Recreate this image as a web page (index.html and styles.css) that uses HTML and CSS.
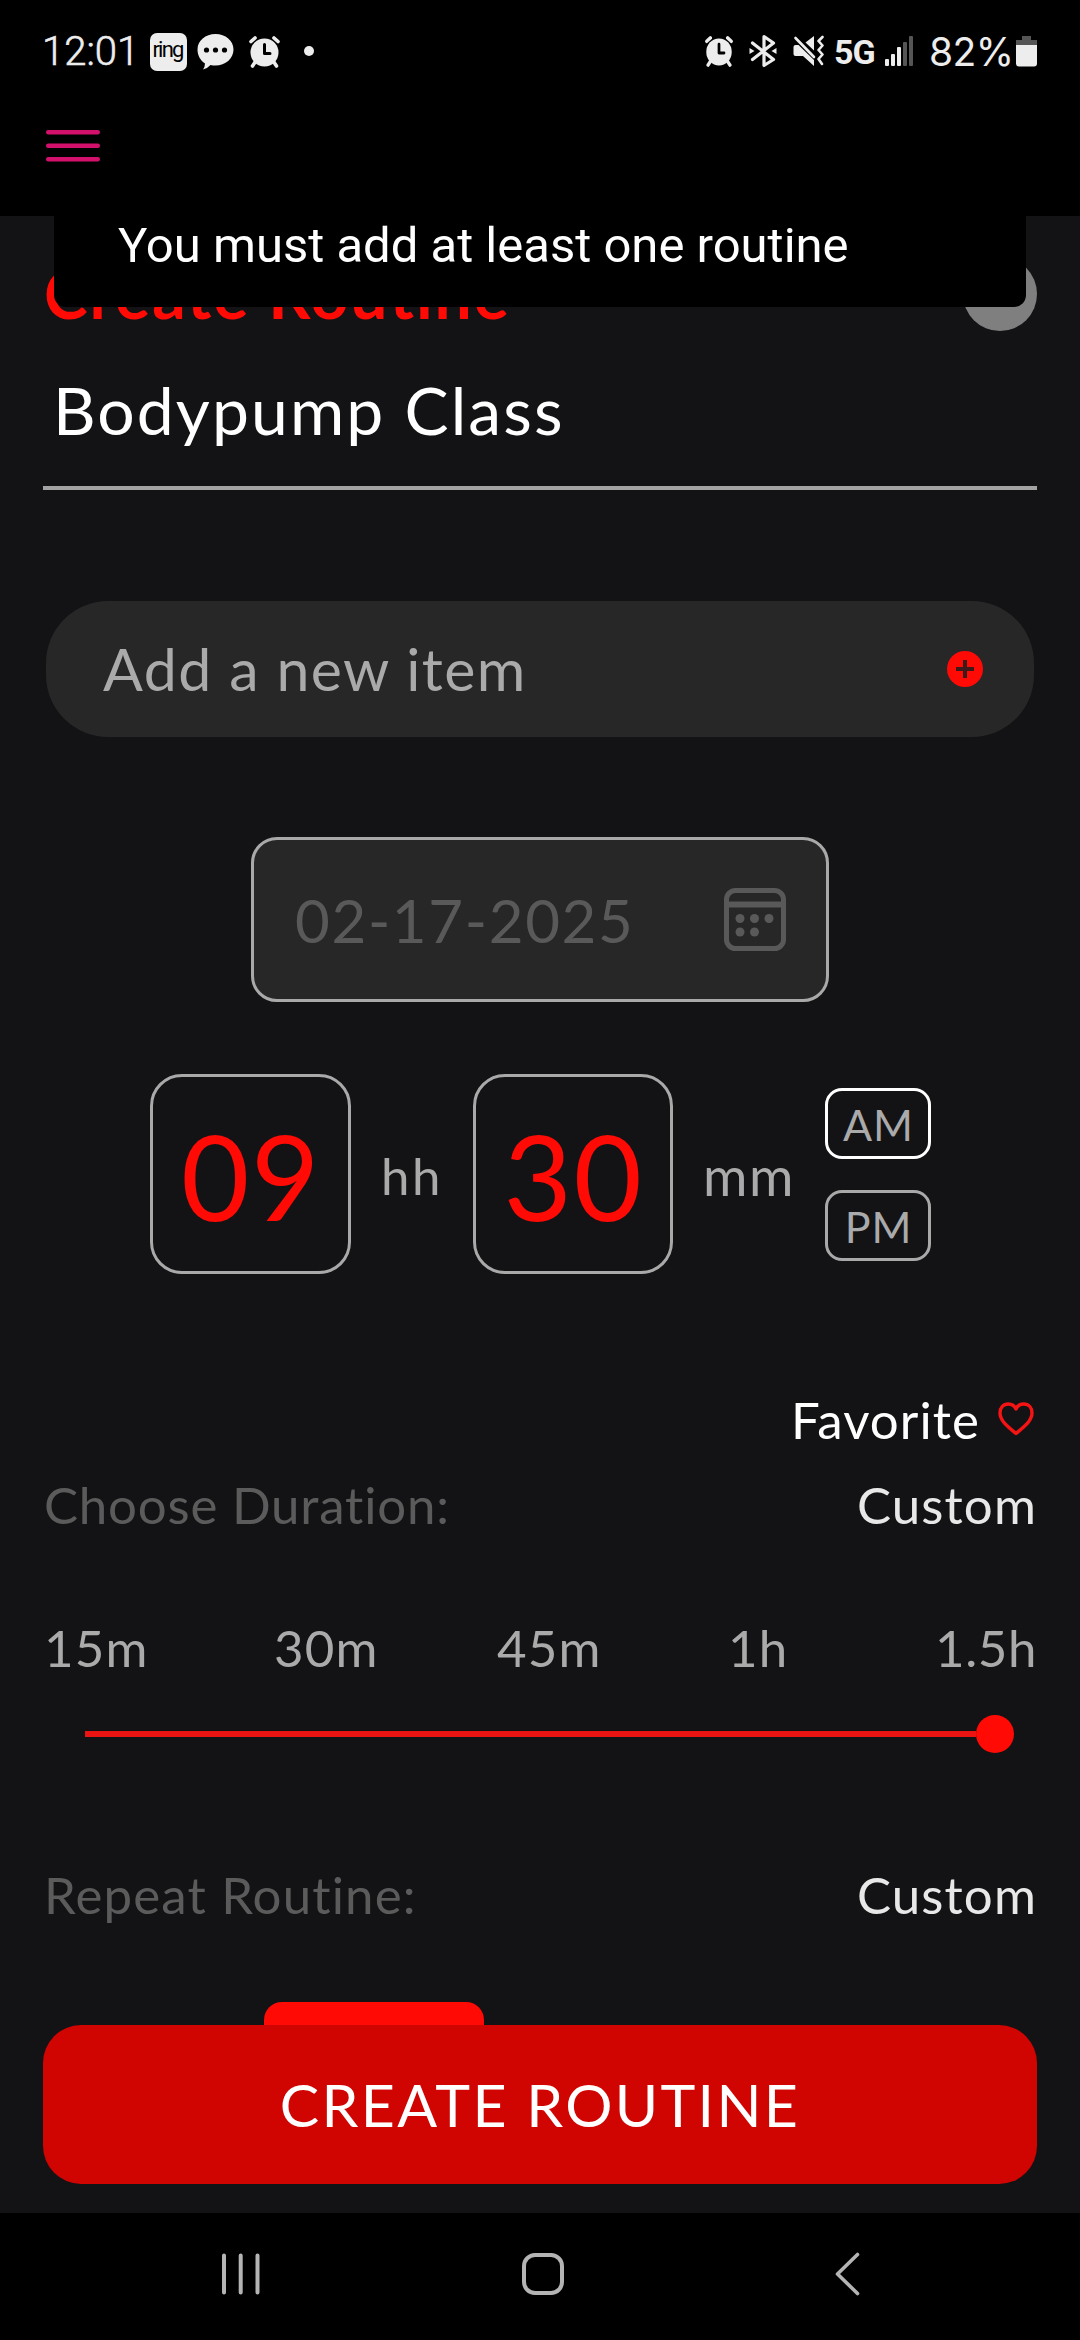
FILE: index.html
```
<!DOCTYPE html>
<html lang="en">
<head>
<meta charset="utf-8">
<title>Create Routine</title>
<link rel="stylesheet" href="styles.css">
</head>
<body>
<div class="status">
  <span class="clock">12:01</span>
  <span class="ring">ring</span>
  <svg class="bubble" width="37" height="37" viewBox="0 0 37 37"><path fill="#ededed" d="M18.500 1C28.500 1 36.500 7.500 36.500 16.500S28.500 32.500 18.500 32.500Q16 32.500 13.500 32Q11 35 6 36.500Q8 33.500 8 30.500C3.500 27.500.5 22.500.5 16.500.5 7.500 8.500 1 18.500 1Z"/><g fill="#000"><circle cx="9.500" cy="17" r="2.600"/><circle cx="18.500" cy="17" r="2.600"/><circle cx="27.500" cy="17" r="2.600"/></g></svg>
  <svg class="alarm" width="33" height="33" viewBox="0 0 33 33"><circle cx="16.500" cy="17.500" r="14" fill="#ededed"/><g fill="none" stroke="#ededed" stroke-width="3.600" stroke-linecap="round"><path d="M3 6.500l4-3.500M30 6.500L26 3M7.500 26.500l-3 4.500M25.500 26.500l3 4.500"/></g><path fill="none" stroke="#000" stroke-width="3" stroke-linecap="round" stroke-linejoin="round" d="M16.500 9.500v9H22"/></svg>
  <span class="dot"></span>
  <div class="tray">
    <svg width="30" height="32" viewBox="0 0 33 33" preserveAspectRatio="none"><circle cx="16.500" cy="17.500" r="14" fill="#ededed"/><g fill="none" stroke="#ededed" stroke-width="3.600" stroke-linecap="round"><path d="M3 6.500l4-3.500M30 6.500L26 3M7.500 26.500l-3 4.500M25.500 26.500l3 4.500"/></g><path fill="none" stroke="#000" stroke-width="3" stroke-linecap="round" stroke-linejoin="round" d="M16.500 9.500v9H22"/></svg>
    <svg class="bt" width="28" height="34" viewBox="0 0 28 34"><path fill="none" stroke="#ededed" stroke-width="3.200" stroke-linecap="round" stroke-linejoin="round" d="M3.500 9L24.500 25.500L15 31.500V2.500L24.500 9L3.500 25.500"/><path fill="#ededed" d="M.5 14v6l5-3zM27.500 14v6l-5-3z"/></svg>
    <svg class="mute" width="31" height="32" viewBox="0 0 31 32"><path fill="#ededed" d="M.5 12q0-2 2-2h3L21 25v6L10 21H2.500q-2 0-2-2zM21 1v14.500L12.500 7.500z"/><path stroke="#ededed" stroke-width="2.600" stroke-linecap="round" d="M2.500 3L21 22"/><path fill="none" stroke="#ededed" stroke-width="2.600" stroke-linecap="round" stroke-linejoin="round" d="M29.500 2L25.500 6l4 4.500-4 4.500 4 4.500-4 4.500 3.500 5"/></svg>
    <span class="net">5G</span>
    <svg class="signal" width="28" height="30" viewBox="0 0 28 30"><g fill="#ededed"><rect x="0" y="23" width="4" height="7" rx="1"/><rect x="6" y="18" width="4" height="12" rx="1"/><rect x="12" y="11" width="4" height="19" rx="1"/></g><g fill="#555"><rect x="18" y="6" width="4" height="24" rx="1"/><rect x="24" y="0" width="4" height="30" rx="1"/></g></svg>
    <span class="level">82%</span>
    <svg width="21" height="31" viewBox="0 0 21 31"><path fill="#555" d="M6 0h9v4h6v6H0V4h6z"/><path fill="#ededed" d="M0 9h21v18.500q0 3-3 3H3q-3 0-3-3z"/></svg>
  </div>
</div>
<header class="appbar">
  <svg width="54" height="32" viewBox="0 0 54 32"><path stroke="#d3116d" stroke-width="4.400" stroke-linecap="round" d="M2.200 2.200h49.600M2.200 15.700h49.600M2.200 29.200h49.600"/></svg>
</header>
<main class="screen">
  <div class="heading"><h1>Create Routine</h1><span class="avatar"></span></div>
  <div class="name">Bodypump Class</div>
  <div class="item"><span>Add a new item</span>
    <svg width="36" height="36" viewBox="0 0 36 36"><circle cx="18" cy="18" r="18" fill="#ff0a05"/><path stroke="#3c1a19" stroke-width="4" d="M18 9v18M9 18h18"/></svg>
  </div>
  <div class="date"><span>02-17-2025</span>
    <svg width="62" height="63" viewBox="0 0 62 63" fill="#595959"><rect x="2.500" y="2.500" width="57" height="58" rx="9" fill="none" stroke="#595959" stroke-width="5"/><path d="M3 13.500h56v6H3z"/><circle cx="16" cy="30.500" r="4.500"/><circle cx="30.500" cy="30.500" r="4.500"/><circle cx="45" cy="30.500" r="4.500"/><circle cx="16" cy="44" r="4.500"/><circle cx="30.500" cy="44" r="4.500"/></svg>
  </div>
  <div class="time">
    <div class="digits">09</div><span class="unit">hh</span>
    <div class="digits">30</div><span class="unit mm">mm</span>
    <div class="ampm"><div class="half on">AM</div><div class="half pm">PM</div></div>
  </div>
  <div class="favorite"><span>Favorite</span>
    <svg width="36" height="34" viewBox="0 0 36 34"><path fill="none" stroke="#f51414" stroke-width="3.400" stroke-linejoin="round" d="M18 31.500C9 24 2 18.500 2 11 2 5.500 5.500 2 10.200 2 13.500 2 16.500 3.500 18 7 19.500 3.500 22.500 2 25.800 2 30.500 2 34 5.500 34 11 34 18.500 27 24 18 31.500Z"/></svg>
  </div>
  <div class="row duration"><span class="label">Choose Duration:</span><span class="custom">Custom</span></div>
  <div class="ticks"><span>15m</span><span>30m</span><span>45m</span><span>1h</span><span>1.5h</span></div>
  <div class="slider"><span class="track"></span><span class="knob"></span></div>
  <div class="row repeat"><span class="label">Repeat Routine:</span><span class="custom">Custom</span></div>
  <div class="tab"></div>
  <button class="create">CREATE ROUTINE</button>
  <div class="toast">You must add at least one routine</div>
</main>
<nav class="nav">
  <svg width="38" height="42" viewBox="0 0 38 42"><path stroke="#b4b4b4" stroke-width="4" stroke-linecap="round" d="M2 2.500v37M18.700 2.500v37M35.500 2.500v37"/></svg>
  <svg width="42" height="42" viewBox="0 0 42 42"><rect x="2" y="2" width="38" height="38" rx="11" fill="none" stroke="#b4b4b4" stroke-width="4"/></svg>
  <svg width="25" height="44" viewBox="0 0 25 44"><path fill="none" stroke="#b4b4b4" stroke-width="3.600" stroke-linecap="round" stroke-linejoin="round" d="M22.500 2.500L2.500 22l20 19.500"/></svg>
</nav>
</body>
</html>
```

FILE: styles.css
```
* { box-sizing: border-box; }
body { margin: 0; width: 1080px; height: 2340px; background: #000; overflow: hidden; display: flex; flex-direction: column; font-family: Lato, "Noto Sans", sans-serif; }
svg { display: block; flex: none; }
span, div, h1, button { white-space: nowrap; }

.status { height: 102px; padding: 0 43px 0 42px; display: flex; align-items: center; color: #ededed; font: 400 40px/48px Roboto, sans-serif; }
.clock { width: 108px; padding-top: 1px; font-weight: 300; -webkit-text-stroke: 0.6px #ededed; }
.ring { width: 37px; height: 38px; margin-top: 1px; border-radius: 7px; background: #ededed; color: #000; font: 400 22px/33px Roboto, sans-serif; letter-spacing: -1.8px; text-align: center; text-indent: -2px; }
.bubble { margin-left: 10px; }
.alarm { margin-left: 14px; }
.dot { width: 10px; height: 10px; margin-left: 23px; border-radius: 50%; background: #ededed; }
.tray { margin-left: auto; display: flex; align-items: center; }
.bt { margin-left: 15px; }
.mute { margin-left: 16px; }
.net { width: 51px; margin-left: 10px; padding-top: 2px; font-weight: 700; font-size: 34px; letter-spacing: -1px; }
.signal { margin-right: 16px; }
.level { width: 87px; padding-top: 1px; font: 400 39px/48px Inter, sans-serif; letter-spacing: -0.6px; }

.appbar { height: 114px; padding: 28px 46px; }

.screen { height: 1997px; flex: none; position: relative; overflow: hidden; padding: 41px 43px 0; background: #131316; }
.heading { height: 74px; padding-left: 1px; display: flex; justify-content: space-between; align-items: center; }
.heading h1 { margin: 0 0 1px; color: #ff0a05; font-size: 66px; line-height: 80px; font-weight: 700; letter-spacing: 1.9px; }
.avatar { width: 74px; height: 74px; border-radius: 50%; background: #7f7f7f; }
.name { margin-top: 39px; height: 120px; padding-left: 10px; border-bottom: 4px solid #a3a3a3; color: #fff; font-size: 66px; line-height: 80px; letter-spacing: 2.1px; }
.item { margin: 111px 3px 0; height: 136px; padding: 0 51px 0 57px; border-radius: 62px; background: #272727; display: flex; align-items: center; justify-content: space-between; color: #aaa; font-size: 59px; letter-spacing: 1.43px; }
.item span { padding-bottom: 2px; }
.date { margin: 100px 208px 0; height: 165px; padding: 0 40px 0 41px; border: 3px solid #a9a9a9; border-radius: 26px; background: #272727; display: flex; align-items: center; justify-content: space-between; color: #595959; font-size: 60px; letter-spacing: 1.65px; }

.time { margin: 72px 0 0 107px; height: 200px; display: grid; grid-template-columns: 201px 122px 200px 152px 106px; align-items: center; text-align: center; color: #aaa; }
.digits { height: 200px; border: 3px solid #a9a9a9; border-radius: 32px; color: #ff0a05; font-size: 118px; line-height: 197px; letter-spacing: 1.56px; text-indent: 1px; }
.unit { padding-top: 3px; font-size: 51px; letter-spacing: 2.5px; line-height: 60px; }
.mm { font-size: 54px; letter-spacing: 1.5px; }
.ampm { display: flex; flex-direction: column; gap: 31px; }
.half { height: 71px; border: 3px solid #a9a9a9; border-radius: 17px; font-size: 43px; line-height: 67px; letter-spacing: 1px; text-indent: 1px; }
.on { border-color: #fff; }

.favorite { margin-top: 116px; height: 60px; padding-right: 3px; display: flex; justify-content: flex-end; align-items: center; gap: 18px; color: #fff; font-size: 51px; line-height: 60px; letter-spacing: 1.07px; }
.favorite svg { margin-bottom: 3px; }
.row { height: 60px; display: flex; justify-content: space-between; font-size: 51px; line-height: 60px; letter-spacing: 1.15px; }
.duration { margin-top: 25px; }
.duration .label { letter-spacing: 0.79px; }
.label { color: #5b5b5b; padding-left: 1px; }
.custom { color: #e8e8e8; letter-spacing: 1.15px; }
.ticks { margin: 83px 0 0 1px; height: 60px; display: grid; grid-template-columns: 230px 223px 231px 207px auto; color: #aaa; font-size: 51px; line-height: 60px; letter-spacing: 1.2px; }
.ticks span:last-child { letter-spacing: 0.6px; }
.slider { margin: 37px 23px 0 42px; height: 38px; display: flex; align-items: center; }
.track { flex: 1; height: 6px; background: #eb1412; }
.knob { width: 38px; height: 38px; border-radius: 50%; background: #ff0a05; }
.repeat { margin-top: 112px; }
.tab { margin: 77px 0 0 221px; width: 220px; height: 72px; border-radius: 18px; background: #ff0a05; }
.create { position: absolute; left: 43px; right: 43px; bottom: 29px; height: 159px; padding: 0; border: 0; border-radius: 38px; background: #d00400; color: #fff; font: 400 59px/80px Lato, sans-serif; letter-spacing: 2.32px; }
.toast { position: absolute; top: 0; left: 54px; right: 54px; height: 91px; padding-left: 64px; border-radius: 0 0 12px 12px; background: #000; color: #fff; font: 400 49px/60px Roboto, sans-serif; }

.nav { flex: 1; padding: 0 222px; padding-bottom: 5px; display: grid; grid-template-columns: 300px 313px 25px; align-items: center; }
```
